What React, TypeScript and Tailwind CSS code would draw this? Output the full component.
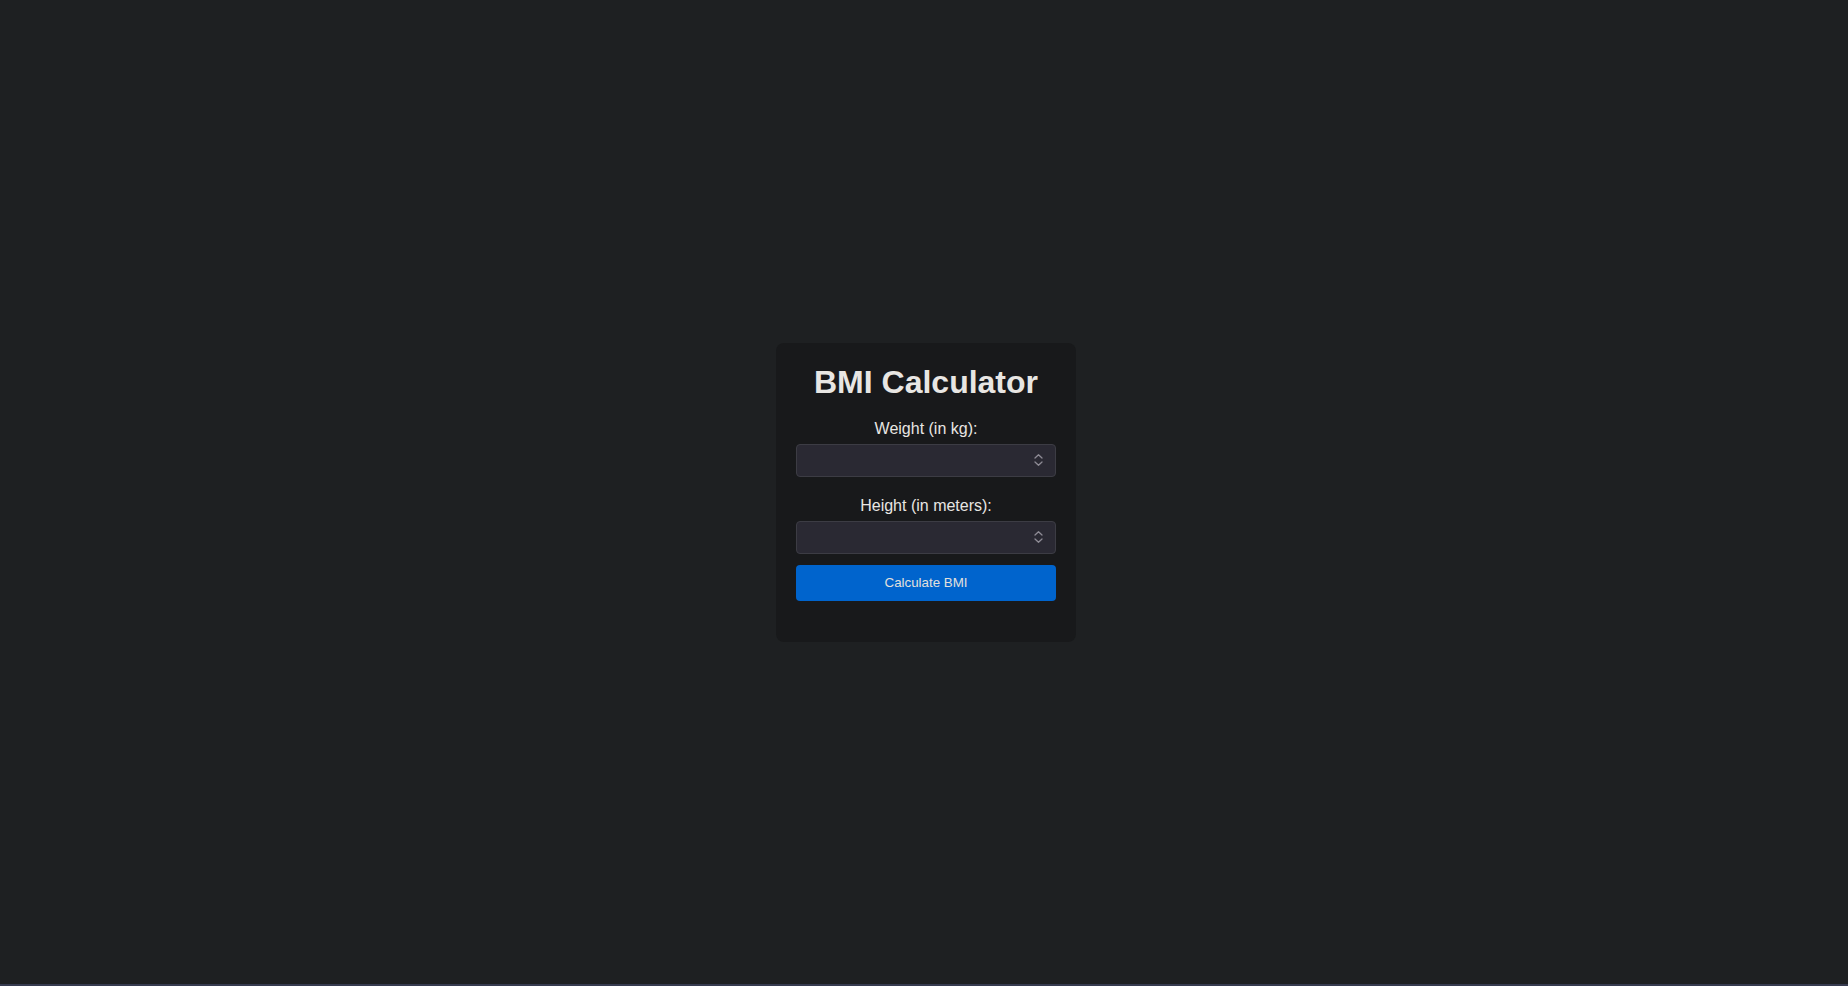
import { useState } from "react";

const Spinner = () => (
  <svg
    className="pointer-events-none absolute right-[13px] top-1/2 -translate-y-1/2"
    width="9"
    height="13"
    viewBox="0 0 9 13"
    fill="none"
    stroke="#8d8a94"
    strokeWidth="1.3"
    strokeLinecap="round"
    strokeLinejoin="round"
  >
    <path d="M1 4.5 L4.5 1.2 L8 4.5" />
    <path d="M1 8.5 L4.5 11.8 L8 8.5" />
  </svg>
);

const NumberField = ({ label, value, onChange }: { label: string; value: string; onChange: (v: string) => void }) => (
  <div className="flex flex-col items-center">
    <label className="text-[16px] leading-[18px] text-[#e8e6e3]">{label}</label>
    <div className="relative mt-[6px] w-full">
      <input
        type="number"
        value={value}
        onChange={e => onChange(e.target.value)}
        className="h-[33px] w-full rounded-[4px] border border-[#3c3c44] bg-[#2a2933] px-2 text-[14px] text-[#e8e6e3] outline-none [appearance:textfield] [&::-webkit-inner-spin-button]:appearance-none [&::-webkit-outer-spin-button]:appearance-none"
      />
      <Spinner />
    </div>
  </div>
);

const App = () => {
  const [weight, setWeight] = useState('');
  const [height, setHeight] = useState('');
  const [bmi, setBmi] = useState<string | null>(null);

  const handleCalculate = () => {
    const w = parseFloat(weight);
    const h = parseFloat(height);
    if (w > 0 && h > 0) setBmi((w / (h * h)).toFixed(1));
  };

  return (
    <section className="flex h-[986px] flex-col bg-[#1e2022] font-['Liberation_Sans',Arial,sans-serif]">
      <div className="flex flex-1 items-center justify-center pl-[4px]">
        <div className="w-[300px] rounded-[8px] bg-[#18191b] px-5 pt-5 pb-[41px] text-center">
          <h1 className="mt-[1px] text-[32px] font-bold leading-[37px] text-[#e8e6e3]">BMI Calculator</h1>

          <div className="mt-[19px]">
            <NumberField label="Weight (in kg):" value={weight} onChange={setWeight} />
          </div>
          <div className="mt-[20px]">
            <NumberField label="Height (in meters):" value={height} onChange={setHeight} />
          </div>

          <button
            onClick={handleCalculate}
            className="mt-[11px] h-[36px] w-full rounded-[4px] bg-[#0064cd] text-[13.33px] text-[#e2e0dc]"
          >
            Calculate BMI
          </button>

          {bmi && <p className="mt-3 text-[16px] text-[#e8e6e3]">Your BMI: {bmi}</p>}
        </div>
      </div>
      <div className="h-[2px] bg-[#363a4f]" />
    </section>
  );
};

export default App;
